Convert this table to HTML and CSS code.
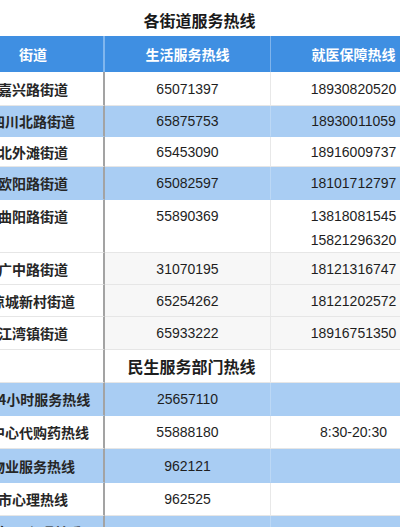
FILE: index.html
```html
<!DOCTYPE html>
<html lang="zh-CN">
<head>
<meta charset="utf-8">
<title>各街道服务热线</title>
<link rel="stylesheet" href="styles.css">
</head>
<body>
<div class="viewport">
  <div class="sheet">
    <div class="title">各街道服务热线</div>
    <div class="grid">
      <div class="c c1 head">街道</div>
      <div class="c c2 head">生活服务热线</div>
      <div class="c c3 head">就医保障热线</div>

      <div class="c c1 name">嘉兴路街道</div>
      <div class="c c2">65071397</div>
      <div class="c c3">18930820520</div>

      <div class="c c1 name blue">四川北路街道</div>
      <div class="c c2 blue">65875753</div>
      <div class="c c3 blue">18930011059</div>

      <div class="c c1 name">北外滩街道</div>
      <div class="c c2">65453090</div>
      <div class="c c3">18916009737</div>

      <div class="c c1 name blue">欧阳路街道</div>
      <div class="c c2 blue">65082597</div>
      <div class="c c3 blue">18101712797</div>

      <div class="c c1 name top">曲阳路街道</div>
      <div class="c c2 top">55890369</div>
      <div class="c c3 top">13818081545<br>15821296320</div>

      <div class="c c1 name">广中路街道</div>
      <div class="c c2 grey">31070195</div>
      <div class="c c3 grey">18121316747</div>

      <div class="c c1 name">凉城新村街道</div>
      <div class="c c2 grey">65254262</div>
      <div class="c c3 grey">18121202572</div>

      <div class="c c1 name">江湾镇街道</div>
      <div class="c c2 grey">65933222</div>
      <div class="c c3 grey">18916751350</div>

      <div class="c c1"></div>
      <div class="c c2 subtitle">民生服务部门热线</div>
      <div class="c c3"></div>

      <div class="c c1 name blue">区24小时服务热线</div>
      <div class="c c2 blue">25657110</div>
      <div class="c c3 blue"></div>

      <div class="c c1 name">医中心代购药热线</div>
      <div class="c c2">55888180</div>
      <div class="c c3">8:30-20:30</div>

      <div class="c c1 name blue">物业服务热线</div>
      <div class="c c2 blue">962121</div>
      <div class="c c3 blue"></div>

      <div class="c c1 name">市心理热线</div>
      <div class="c c2">962525</div>
      <div class="c c3"></div>

      <div class="c c1 name blue">老年人心理关爱</div>
      <div class="c c2 blue">65180001</div>
      <div class="c c3 blue"></div>
    </div>
  </div>
</div>
</body>
</html>
```

FILE: styles.css
```css
html, body {
  margin: 0;
  padding: 0;
  background: #ffffff;
}

.viewport {
  width: 400px;
  height: 527px;
  overflow: hidden;
}

.sheet {
  width: 473px;
  margin-left: -37px;
  font-family: "Liberation Sans", "Noto Sans CJK SC", sans-serif;
  color: #1e1e1e;
  font-size: 14px;
}

.title {
  height: 36px;
  box-sizing: border-box;
  padding-top: 4px;
  line-height: 32px;
  text-align: center;
  font-size: 16px;
  font-weight: 700;
  font-family: "Noto Sans CJK SC", sans-serif;
  color: #1a1a1a;
}

.grid {
  display: grid;
  grid-template-columns: 142px 166px 165px;
  grid-template-rows: 36px 34px 31px 30px 33px 53px 32px 32px 33px 33px 33px 33px 34px 33px 33px;
}

.c {
  box-sizing: border-box;
  display: flex;
  align-items: center;
  justify-content: center;
  text-align: center;
  white-space: nowrap;
  border-bottom: 1px solid #e6e6e6;
  line-height: 24px;
  background: #ffffff;
}

.c1 {
  border-right: 2px solid #a3a3a3;
}

.c2 {
  border-right: 1px solid #e8e8e8;
}

.name {
  font-family: "Noto Sans CJK SC", sans-serif;
  font-weight: 600;
  font-size: 14px;
  color: #262626;
}

.head {
  background: #3f8fe2;
  color: #ffffff;
  font-family: "Noto Sans CJK SC", sans-serif;
  font-weight: 700;
  border-bottom: none;
}

.c1.head {
  border-right: 2px solid #80b6ee;
}

.c2.head {
  border-right: 1px solid #7fb4ec;
}

.blue {
  background: #a9cdf3;
  border-bottom-color: #a9cdf3;
}

.c2.blue {
  border-right-color: #bcd8f5;
}

.grey {
  background: #f7f7f7;
}

.top {
  align-items: flex-start;
  padding-top: 4px;
}

.subtitle {
  font-family: "Noto Sans CJK SC", sans-serif;
  font-weight: 700;
  font-size: 16px;
  padding-left: 8px;
  overflow: visible;
}
```
